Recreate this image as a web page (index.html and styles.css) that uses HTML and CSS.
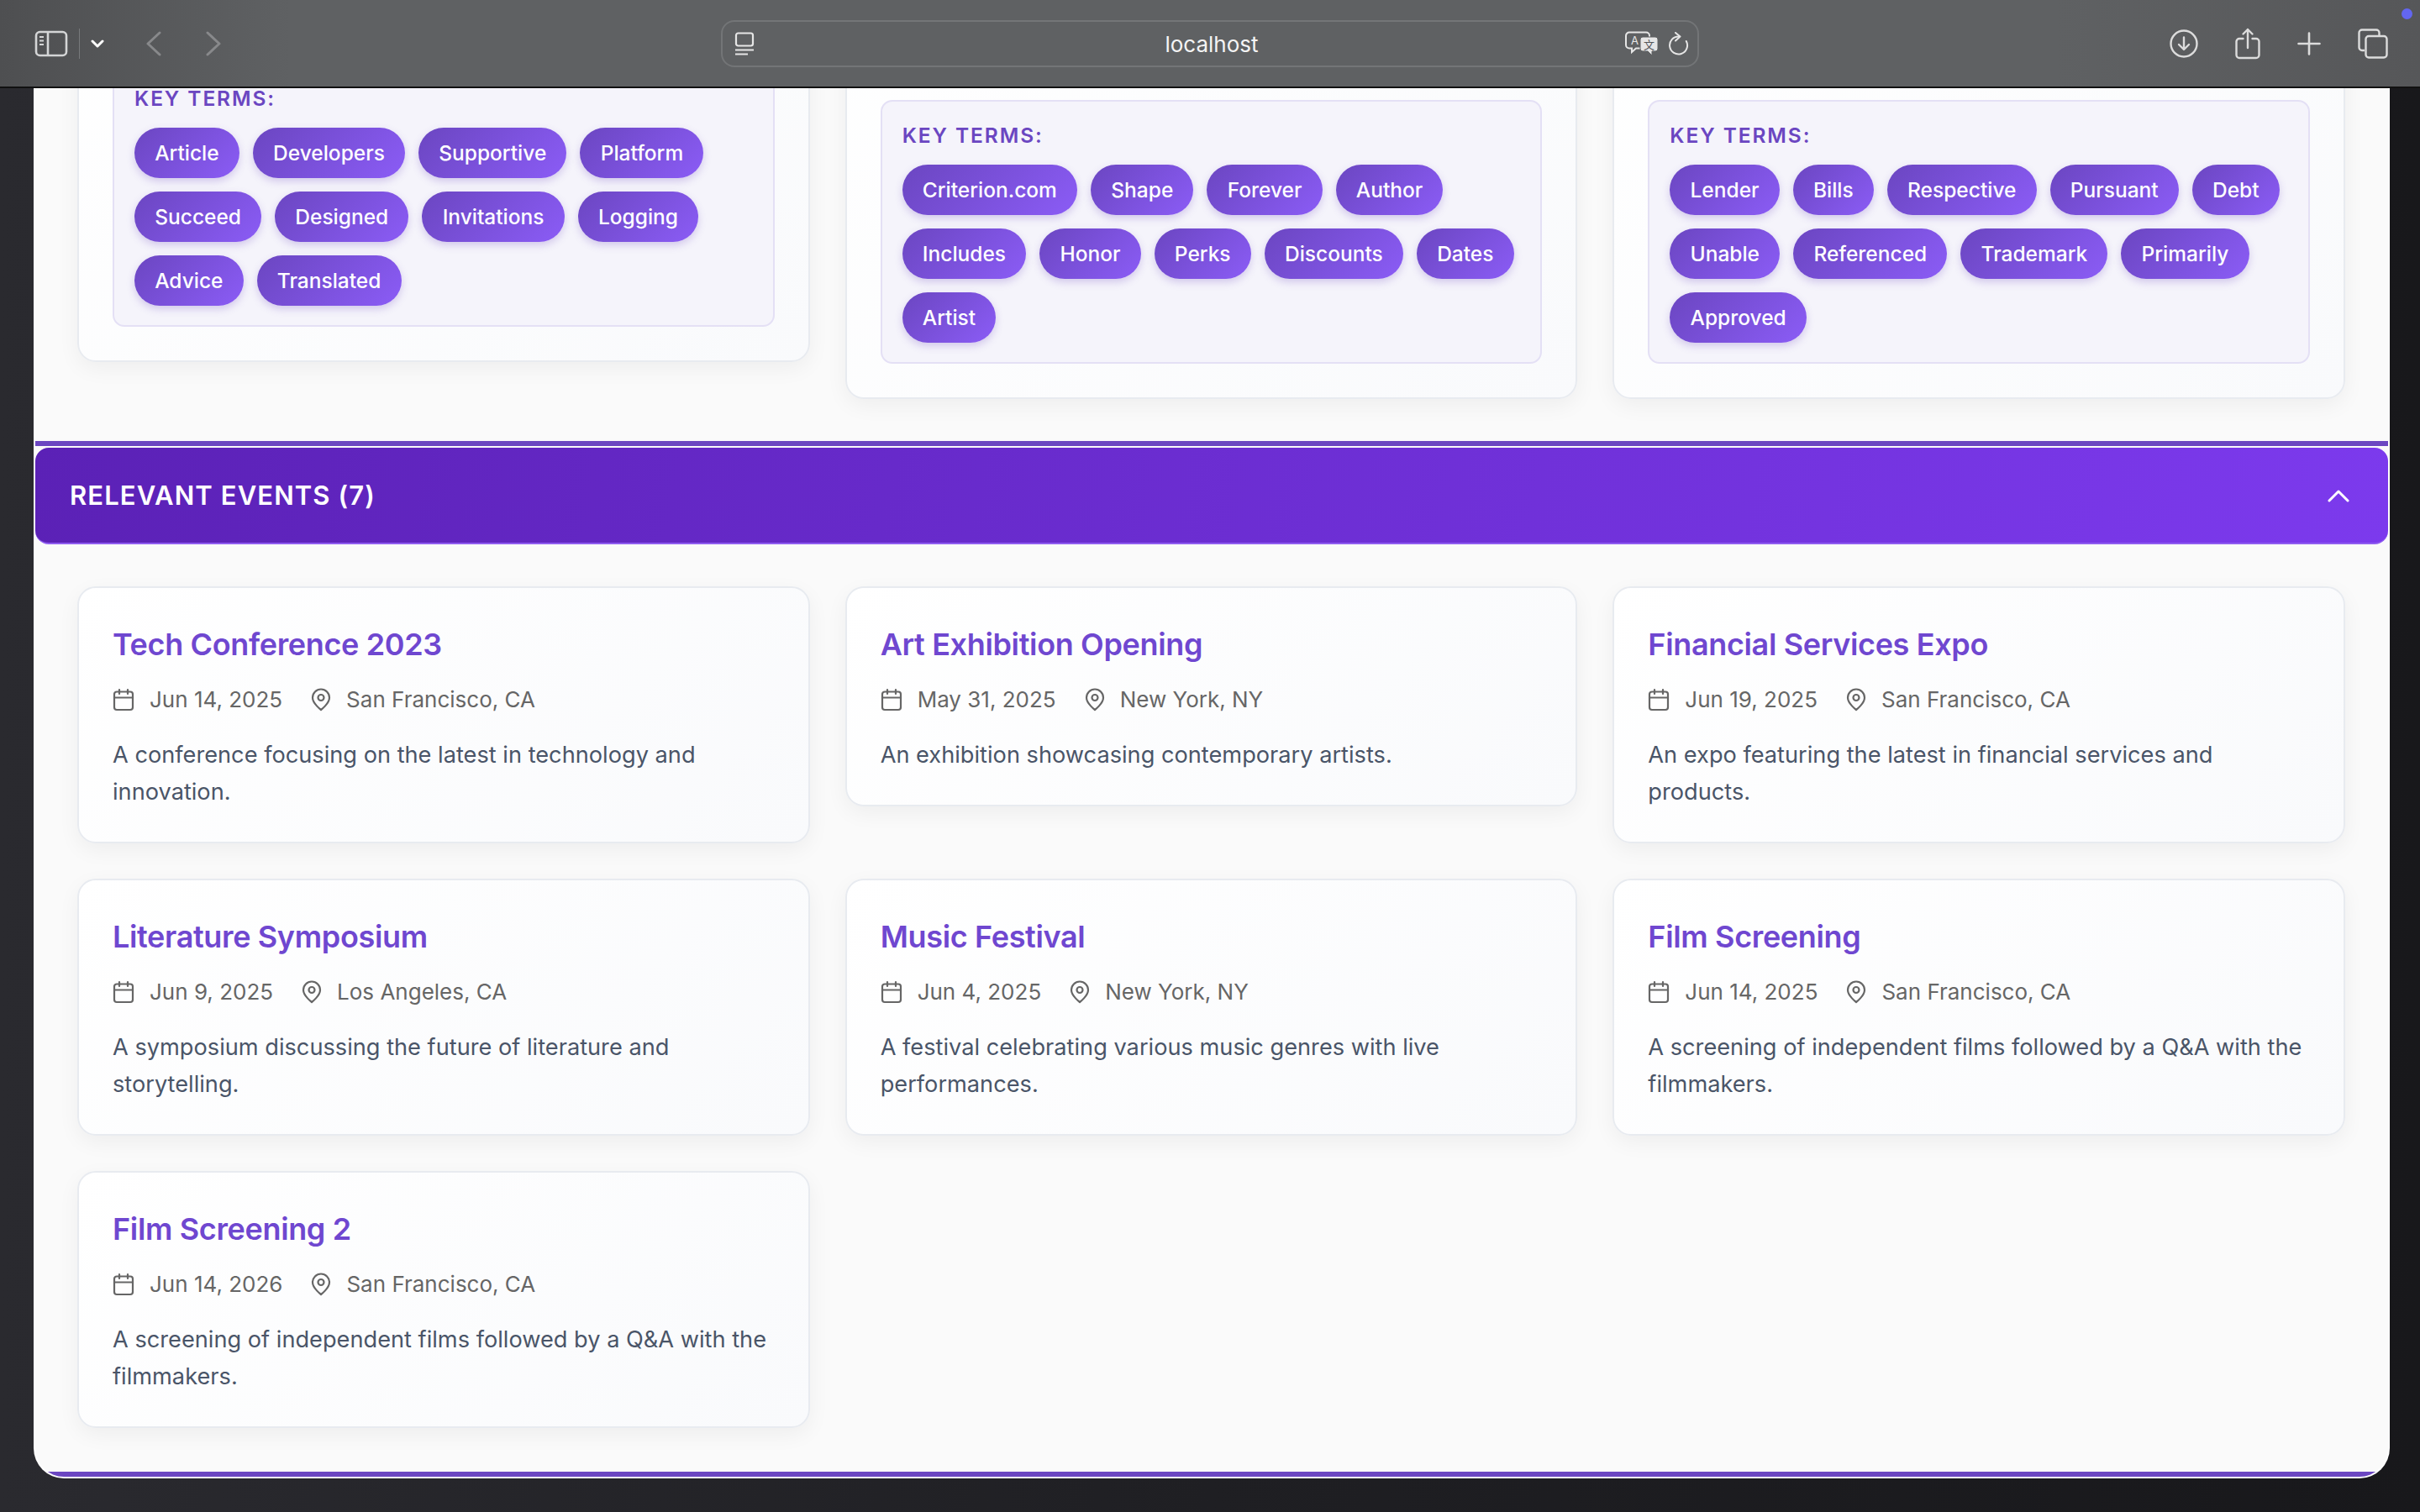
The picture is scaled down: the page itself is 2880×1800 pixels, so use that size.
FILE: index.html

```html
<!DOCTYPE html>
<html lang="en">
<head>
<meta charset="utf-8"/>
<title>localhost</title>
<link rel="stylesheet" href="styles.css">
</head>
<body>
<!-- Browser toolbar -->
<header class="toolbar">
  <div class="toolbar-left">
    <svg class="ico-sidebar" width="40" height="32" viewBox="0 0 40 32" fill="none" stroke="#d4d5d6" stroke-width="2.6"><rect x="2" y="2" width="36" height="28" rx="4.5"/><path d="M16 2v28"/><path d="M6 8h5M6 12.5h5M6 17h5" stroke-width="2"/></svg>
    <span class="tool-divider"></span>
    <svg class="ico-caret" width="16" height="10" viewBox="0 0 16 10" fill="none" stroke="#fff" stroke-width="3" stroke-linecap="round" stroke-linejoin="round"><path d="M2 2l6 6 6-6"/></svg>
    <svg class="ico-back" width="18" height="30" viewBox="0 0 18 30" fill="none" stroke="#88898b" stroke-width="3" stroke-linecap="round" stroke-linejoin="round"><path d="M16 2L2 15l14 13"/></svg>
    <svg class="ico-forward" width="18" height="30" viewBox="0 0 18 30" fill="none" stroke="#88898b" stroke-width="3" stroke-linecap="round" stroke-linejoin="round"><path d="M2 2l14 13L2 28"/></svg>
  </div>
  <div class="url-bar">
    <svg width="24" height="28" viewBox="0 0 24 28" fill="none" stroke="#e6e6e6" stroke-width="2.2"><rect x="2" y="1.5" width="20" height="15" rx="2.5"/><path d="M1 21.5h22M1 26.5h15"/></svg>
    <span class="url-text">localhost</span>
    <svg class="ico-translate" width="40" height="30" viewBox="0 0 40 30"><path d="M5 1.500h20a4 4 0 0 1 4 4v11a4 4 0 0 1-4 4H13l-5 4.500v-4.500H5a4 4 0 0 1-4-4v-11a4 4 0 0 1 4-4z" fill="none" stroke="#e6e6e6" stroke-width="2"/><text x="11.5" y="15.500" class="tr-a">A</text><path d="M21 7h15a3 3 0 0 1 3 3v11a3 3 0 0 1-3 3h-4v5l-5-5h-6a3 3 0 0 1-3-3V10a3 3 0 0 1 3-3z" fill="#e6e6e6" stroke="#5f6163" stroke-width="1"/><text x="28.5" y="20.500" class="tr-b">文</text></svg>
    <svg width="26" height="28" viewBox="0 0 26 28" fill="none" stroke="#e6e6e6" stroke-width="2" stroke-linecap="round" stroke-linejoin="round"><path d="M20.800 11A10.500 10.500 0 1 1 12 5.500"/><path d="M8 1l5.500 4.500L8 10.500"/></svg>
  </div>
  <div class="toolbar-right">
    <svg width="34" height="34" viewBox="0 0 34 34" fill="none" stroke="#dcdcdc" stroke-width="2.4" stroke-linecap="round" stroke-linejoin="round"><circle cx="17" cy="17" r="15.500"/><path d="M17 9.500v14M11 18l6 6 6-6"/></svg>
    <svg width="30" height="38" viewBox="0 0 30 38" fill="none" stroke="#dcdcdc" stroke-width="2.4" stroke-linecap="round" stroke-linejoin="round"><path d="M9.500 13H5a3.500 3.500 0 0 0-3.500 3.500v16A3.500 3.500 0 0 0 5 36h20a3.500 3.500 0 0 0 3.500-3.500v-16A3.500 3.500 0 0 0 25 13h-4.500"/><path d="M15 24V2M9.500 7.500L15 2l5.500 5.500"/></svg>
    <svg width="28" height="28" viewBox="0 0 28 28" fill="none" stroke="#dcdcdc" stroke-width="2.6" stroke-linecap="round"><path d="M14 1.500v25M1.500 14h25"/></svg>
    <svg width="36" height="36" viewBox="0 0 36 36" fill="none" stroke="#dcdcdc" stroke-width="2.4" stroke-linejoin="round"><path d="M8 26H5a3.500 3.500 0 0 1-3.500-3.500V5A3.500 3.500 0 0 1 5 1.500h17A3.500 3.500 0 0 1 25.500 5v3"/><rect x="9.500" y="9" width="25" height="25.500" rx="3.500"/></svg>
  </div>
  <span class="record-dot"></span>
</header>

<!-- Page, scrolled to the bottom -->
<div class="window">
  <main class="page">
    <div class="card-grid">
      <article class="card">
        <div class="card-hidden"></div>
        <div class="terms">
          <div class="terms-label">Key Terms:</div>
          <div class="chips">
            <span class="chip">Article</span><span class="chip">Developers</span><span class="chip">Supportive</span><span class="chip">Platform</span><span class="chip">Succeed</span><span class="chip">Designed</span><span class="chip">Invitations</span><span class="chip">Logging</span><span class="chip">Advice</span><span class="chip">Translated</span>
          </div>
        </div>
      </article>
      <article class="card">
        <div class="card-hidden card-hidden-long"></div>
        <div class="terms">
          <div class="terms-label">Key Terms:</div>
          <div class="chips">
            <span class="chip">Criterion.com</span><span class="chip">Shape</span><span class="chip">Forever</span><span class="chip">Author</span><span class="chip">Includes</span><span class="chip">Honor</span><span class="chip">Perks</span><span class="chip">Discounts</span><span class="chip">Dates</span><span class="chip">Artist</span>
          </div>
        </div>
      </article>
      <article class="card">
        <div class="card-hidden card-hidden-long"></div>
        <div class="terms">
          <div class="terms-label">Key Terms:</div>
          <div class="chips">
            <span class="chip">Lender</span><span class="chip">Bills</span><span class="chip">Respective</span><span class="chip">Pursuant</span><span class="chip">Debt</span><span class="chip">Unable</span><span class="chip">Referenced</span><span class="chip">Trademark</span><span class="chip">Primarily</span><span class="chip">Approved</span>
          </div>
        </div>
      </article>
    </div>

    <section class="events">
      <div class="events-header">
        <h2>RELEVANT EVENTS (7)</h2>
        <svg width="26" height="16" viewBox="0 0 26 16" fill="none" stroke="#fff" stroke-width="3" stroke-linecap="round" stroke-linejoin="round"><path d="M2 14L13 3l11 11"/></svg>
      </div>
      <div class="card-grid events-grid">
        <article class="card">
          <h3 class="event-title">Tech Conference 2023</h3>
          <div class="event-meta">
            <span class="meta-item"><svg class="meta-ico"><use href="#i-cal"/></svg>Jun 14, 2025</span>
            <span class="meta-item"><svg class="meta-ico"><use href="#i-pin"/></svg>San Francisco, CA</span>
          </div>
          <p class="event-desc">A conference focusing on the latest in technology and innovation.</p>
        </article>
        <article class="card">
          <h3 class="event-title">Art Exhibition Opening</h3>
          <div class="event-meta">
            <span class="meta-item"><svg class="meta-ico"><use href="#i-cal"/></svg>May 31, 2025</span>
            <span class="meta-item"><svg class="meta-ico"><use href="#i-pin"/></svg>New York, NY</span>
          </div>
          <p class="event-desc">An exhibition showcasing contemporary artists.</p>
        </article>
        <article class="card">
          <h3 class="event-title">Financial Services Expo</h3>
          <div class="event-meta">
            <span class="meta-item"><svg class="meta-ico"><use href="#i-cal"/></svg>Jun 19, 2025</span>
            <span class="meta-item"><svg class="meta-ico"><use href="#i-pin"/></svg>San Francisco, CA</span>
          </div>
          <p class="event-desc">An expo featuring the latest in financial services and products.</p>
        </article>
        <article class="card">
          <h3 class="event-title">Literature Symposium</h3>
          <div class="event-meta">
            <span class="meta-item"><svg class="meta-ico"><use href="#i-cal"/></svg>Jun 9, 2025</span>
            <span class="meta-item"><svg class="meta-ico"><use href="#i-pin"/></svg>Los Angeles, CA</span>
          </div>
          <p class="event-desc">A symposium discussing the future of literature and storytelling.</p>
        </article>
        <article class="card">
          <h3 class="event-title">Music Festival</h3>
          <div class="event-meta">
            <span class="meta-item"><svg class="meta-ico"><use href="#i-cal"/></svg>Jun 4, 2025</span>
            <span class="meta-item"><svg class="meta-ico"><use href="#i-pin"/></svg>New York, NY</span>
          </div>
          <p class="event-desc">A festival celebrating various music genres with live performances.</p>
        </article>
        <article class="card">
          <h3 class="event-title">Film Screening</h3>
          <div class="event-meta">
            <span class="meta-item"><svg class="meta-ico"><use href="#i-cal"/></svg>Jun 14, 2025</span>
            <span class="meta-item"><svg class="meta-ico"><use href="#i-pin"/></svg>San Francisco, CA</span>
          </div>
          <p class="event-desc">A screening of independent films followed by a Q&amp;A with the filmmakers.</p>
        </article>
        <article class="card">
          <h3 class="event-title">Film Screening 2</h3>
          <div class="event-meta">
            <span class="meta-item"><svg class="meta-ico"><use href="#i-cal"/></svg>Jun 14, 2026</span>
            <span class="meta-item"><svg class="meta-ico"><use href="#i-pin"/></svg>San Francisco, CA</span>
          </div>
          <p class="event-desc">A screening of independent films followed by a Q&amp;A with the filmmakers.</p>
        </article>
      </div>
    </section>
  </main>
</div>

<!-- Shared icons -->
<svg class="icon-defs" width="0" height="0">
  <symbol id="i-cal" viewBox="0 0 28 28" fill="none" stroke="#666" stroke-width="2.2" stroke-linecap="round" stroke-linejoin="round"><rect x="2" y="4.500" width="22" height="21.500" rx="3"/><path d="M2 11.500h22M8 2v5M18 2v5"/></symbol>
  <symbol id="i-pin" viewBox="0 0 28 28" fill="none" stroke="#666" stroke-width="2.2" stroke-linecap="round" stroke-linejoin="round"><path d="M14 26S4 18.500 4 11.500a10 10 0 0 1 20 0C24 18.500 14 26 14 26z"/><circle cx="14" cy="11.500" r="3.500"/></symbol>
</svg>
</body>
</html>
```

FILE: styles.css

```css
* {
    box-sizing: border-box;
}

body {
    margin: 0;
    height: 1800px;
    display: flex;
    flex-direction: column;
    overflow: hidden;
    background: linear-gradient(90deg, #2a2a2f, #1f1f23 50%, #18181b);
    font-family: 'Inter', 'Liberation Sans', sans-serif;
}

/* Toolbar */
.toolbar {
    position: relative;
    flex: none;
    height: 105px;
    display: grid;
    grid-template-columns: 858px 1164px 1fr;
    align-items: center;
    background: linear-gradient(90deg, #4e4f51, #5f6163 12%, #5f6163 85%, #565759);
    border-bottom: 2px solid #111;
}

.toolbar-left {
    display: flex;
    align-items: center;
    padding-left: 41px;
}

.tool-divider {
    width: 1px;
    height: 36px;
    margin: 0 13px;
    background: #77797b;
}

.ico-back {
    margin-left: 50px;
}

.ico-forward {
    margin-left: 53px;
}

.url-bar {
    height: 56px;
    display: flex;
    align-items: center;
    gap: 12px;
    padding: 0 8px 0 14px;
    border: 2px solid #737577;
    border-radius: 16px;
}

.url-text {
    flex: 1;
    text-align: center;
    padding: 2px 0 0 52px;
    color: #f4f4f4;
    font-size: 26px;
    font-weight: 400;
}

.tr-a {
    font-size: 13px;
    fill: #e6e6e6;
    text-anchor: middle;
}

.tr-b {
    font-family: 'Noto Sans CJK SC', sans-serif;
    font-size: 13px;
    fill: #55575a;
    text-anchor: middle;
}

.toolbar-right {
    display: flex;
    align-items: center;
    justify-content: flex-end;
    gap: 44px;
    padding-right: 38px;
}

.record-dot {
    position: absolute;
    top: 10px;
    right: 9px;
    width: 13px;
    height: 13px;
    border-radius: 50%;
    background: #6366f1;
}

/* Page window */
.window {
    flex: none;
    height: 1655px;
    margin: 0 36px 0 40px;
    padding: 0 2px 2px;
    background: #fff;
    border-radius: 0 0 36px 36px;
    overflow: hidden;
}

.page {
    height: 100%;
    display: flex;
    flex-direction: column;
    justify-content: flex-end;
    overflow: hidden;
    background: #fafafa;
    border-radius: 0 0 34px 34px;
}

.card-grid {
    flex: none;
    display: grid;
    grid-template-columns: repeat(3, 1fr);
    gap: 42px;
    align-items: start;
    padding: 0 51px 0 50px;
}

.card {
    padding: 40px;
    background: linear-gradient(135deg, #fff, #f9fafc);
    border: 2px solid #e8ebf0;
    border-radius: 22px;
    box-shadow: 0 8px 26px rgba(0,0,0,0.05);
}

.card-hidden {
    height: 141px;
}

.card-hidden-long {
    height: 185px;
}

/* Key terms */
.terms {
    padding: 29px 24px 23px;
    background: #f5f4fb;
    border: 2px solid #e4e0f5;
    border-radius: 14px;
}

.terms-label {
    margin-bottom: 24px;
    color: #6b46c1;
    font-size: 24.500px;
    font-weight: 600;
    line-height: 22px;
    letter-spacing: 1.900px;
    text-transform: uppercase;
}

.chips {
    display: flex;
    flex-wrap: wrap;
    gap: 16px;
}

.chip {
    height: 60px;
    padding: 0 24.200px;
    display: flex;
    align-items: center;
    color: #fff;
    font-size: 24.500px;
    font-weight: 500;
    background: linear-gradient(135deg, #6b46c1, #8b5cf6);
    border-radius: 30px;
    box-shadow: 0 4px 10px rgba(107,70,193,0.25);
}

/* Events */
.events {
    flex: none;
    margin-top: 50px;
    border-top: 6px solid #6b46c1;
    border-bottom: 6px solid #6b46c1;
}

.events-header {
    height: 115px;
    margin-top: 2px;
    padding: 0 46px 0 41px;
    display: flex;
    align-items: center;
    justify-content: space-between;
    color: #fff;
    background: linear-gradient(100deg, #5b21b6, #7c3aed);
    border-bottom: 2px solid #8f5cf0;
    border-radius: 16px;
}

.events-header h2 {
    margin: 0;
    font-size: 31px;
    font-weight: 600;
    letter-spacing: 1.100px;
}

.events-grid {
    padding-top: 50px;
    padding-bottom: 52px;
}

.events-grid .card {
    padding-bottom: 37px;
}

.event-title {
    margin: 0 0 18px;
    color: #6f47d0;
    font-size: 36px;
    font-weight: 600;
    letter-spacing: -0.350px;
    line-height: 54px;
}

.event-meta {
    display: flex;
    gap: 32px;
    margin-bottom: 23px;
}

.meta-item {
    display: flex;
    align-items: center;
    gap: 16px;
    color: #666;
    font-size: 26px;
    line-height: 42px;
}

.meta-ico {
    width: 28px;
    height: 28px;
}

.event-desc {
    margin: 0;
    color: #4a5568;
    font-size: 27.200px;
    line-height: 44px;
}

.icon-defs {
    position: absolute;
}
```
